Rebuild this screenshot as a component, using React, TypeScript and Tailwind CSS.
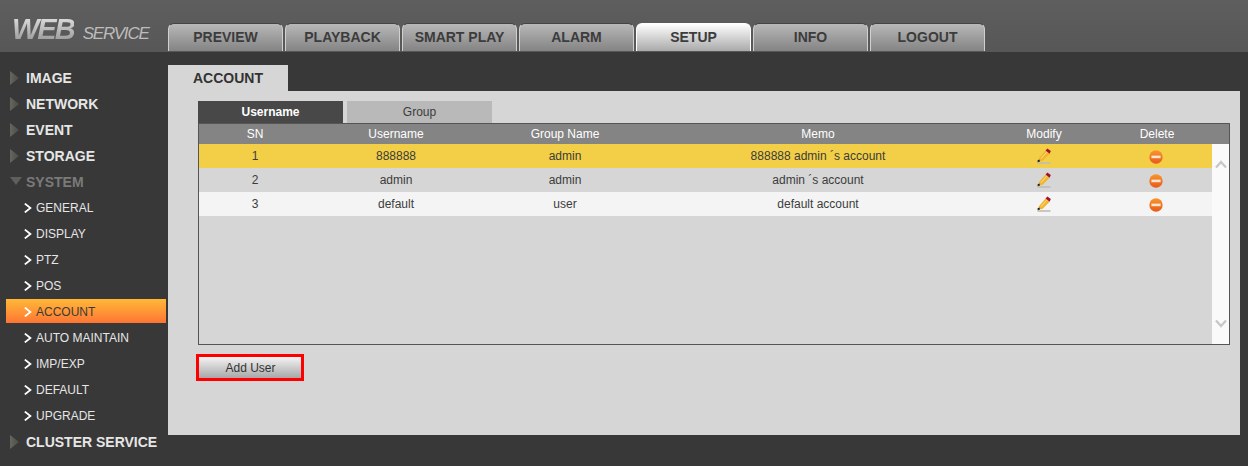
const TABS = ['PREVIEW', 'PLAYBACK', 'SMART PLAY', 'ALARM', 'SETUP', 'INFO', 'LOGOUT'];
const SUB_ITEMS = ['GENERAL', 'DISPLAY', 'PTZ', 'POS', 'ACCOUNT', 'AUTO MAINTAIN', 'IMP/EXP', 'DEFAULT', 'UPGRADE'];
const USERS = [
  { sn: 1, name: '888888', group: 'admin', memo: '888888 admin ´s account', rowClass: 'bg-[#f2cf46]' },
  { sn: 2, name: 'admin', group: 'admin', memo: 'admin ´s account', rowClass: 'bg-[#d6d6d6]' },
  { sn: 3, name: 'default', group: 'user', memo: 'default account', rowClass: 'bg-[#f4f4f4]' },
];

function Triangle({ down = false, dim = false }: { down?: boolean; dim?: boolean }) {
  return (
    <svg width="13" height="14" viewBox="0 0 13 14" className="shrink-0">
      <defs>
        <linearGradient id="tri" x1="0" y1="0" x2="1" y2="0">
          <stop offset="0" stopColor="#66665f" />
          <stop offset="1" stopColor="#4c4c48" />
        </linearGradient>
      </defs>
      {down
        ? <path d="M0 2 H12 L6 10 Z" fill={dim ? '#5e5e5a' : 'url(#tri)'} />
        : <path d="M0 0 L9 7 L0 14 Z" fill="url(#tri)" />}
    </svg>
  );
}

function Chevron() {
  return (
    <svg width="8" height="10" viewBox="0 0 8 10" className="shrink-0">
      <path d="M0.8 0.6 L6.4 5 L0.8 9.4" fill="none" stroke="#ffffff" strokeWidth="1.8" />
    </svg>
  );
}

function MainItem({ label, down = false, dim = false }: { label: string; down?: boolean; dim?: boolean }) {
  return (
    <div className="h-[26px] flex items-center pl-[10px] gap-[3px]">
      <div className="w-[13px] flex justify-center"><Triangle down={down} dim={dim} /></div>
      <span className={`text-[14px] font-bold ${dim ? 'text-[#7a7a7a]' : 'text-[#e6e6e6]'}`}>{label}</span>
    </div>
  );
}

function PencilIcon() {
  return (
    <svg width="14" height="16" viewBox="0 0 14 16" className="-ml-[1px]">
      <rect x="0.5" y="14.2" width="13" height="1.6" fill="#bdbdb6" />
      <path d="M2 10 L8.6 2.6 L12.6 5.8 L5.4 13 L1.4 13.6 Z" fill="#f3b42e" />
      <path d="M4 10.6 L10.2 3.8" stroke="#fbe28a" strokeWidth="1" />
      <path d="M8.6 2.6 L10.4 0.6 L13.8 3 L12.6 5.8 Z" fill="#a3122a" />
      <path d="M0.6 12.2 L2.4 11.6 L3 13.6 L0.6 14.2 Z" fill="#222222" />
    </svg>
  );
}

function DeleteIcon() {
  return (
    <svg width="14" height="14" viewBox="0 0 14 14">
      <defs>
        <linearGradient id="del" x1="0" y1="0" x2="0" y2="1">
          <stop offset="0" stopColor="#f8962a" />
          <stop offset="1" stopColor="#e8591a" />
        </linearGradient>
      </defs>
      <circle cx="7" cy="7" r="6.7" fill="url(#del)" />
      <rect x="2.4" y="5.6" width="9.2" height="2.6" fill="#f6e3d2" />
    </svg>
  );
}

export default function App() {
  return (
    <div className="w-[1248px] h-[466px] overflow-hidden bg-[#383838] font-['Liberation_Sans',Arial,sans-serif] flex flex-col">
      {/* top bar */}
      <div className="h-[52px] shrink-0 bg-gradient-to-b from-[#5e5e5e] to-[#575757] flex">
        <div className="w-[168px] shrink-0 pl-3 pt-[12px] flex items-baseline gap-[9px] italic">
          <span className="text-[29px] leading-[34px] font-bold tracking-[-2px] text-transparent bg-clip-text bg-gradient-to-b from-[#ededed] to-[#8e8e8e]">WEB</span>
          <span className="text-[17px] leading-[20px] tracking-[-1.2px] text-[#bdbdbd]">SERVICE</span>
        </div>
        <div className="flex gap-[2px] pt-[23px] h-[52px]">
          {TABS.map(t => (
            <div
              key={t}
              className={`w-[115px] h-[28px] rounded-t-[6px] border border-b-0 flex items-center justify-center text-[14px] font-bold ${
                t === 'SETUP'
                  ? 'bg-gradient-to-b from-[#ffffff] to-[#aaaaaa] border-[#ffffff] text-[#3c3c3c]'
                  : 'bg-gradient-to-b from-[#b8b8b8] to-[#848484] border-[#d0d0d0] border-t-[#444444] text-[#3c3c3c]'
              }`}
            >
              {t}
            </div>
          ))}
        </div>
      </div>

      <div className="flex flex-1 min-h-0">
        {/* sidebar */}
        <div className="w-[168px] shrink-0 pt-[13px]">
          <MainItem label="IMAGE" />
          <MainItem label="NETWORK" />
          <MainItem label="EVENT" />
          <MainItem label="STORAGE" />
          <MainItem label="SYSTEM" down dim />
          {SUB_ITEMS.map(s => (
            <div key={s} className="h-[26px] flex items-start">
              <div
                className={`w-[160px] h-[24px] ml-[6px] pt-[1px] flex items-center pl-[18px] gap-[4px] text-[12px] ${
                  s === 'ACCOUNT' ? 'bg-gradient-to-b from-[#ffb838] to-[#ff7433] text-[#3a3a3a]' : 'text-[#e6e6e6]'
                }`}
              >
                <Chevron />
                <span>{s}</span>
              </div>
            </div>
          ))}
          <MainItem label="CLUSTER SERVICE" />
        </div>

        {/* content */}
        <div className="w-[1072px] pt-[13px]">
          <div className="w-[120px] h-[26px] bg-[#d6d6d6] flex items-center pl-[25px] text-[14px] font-bold text-[#333333]">ACCOUNT</div>
          <div className="h-[344px] bg-[#d6d6d6] pt-[10px] pl-[30px] pr-[10px]">
            <div className="flex gap-[4px] h-[22px] text-[12px]">
              <div className="w-[145px] bg-[#484848] text-white font-bold flex items-center justify-center">Username</div>
              <div className="w-[145px] bg-[#b9b9b9] text-[#3c3c3c] flex items-center justify-center">Group</div>
            </div>
            <div className="w-[1032px] h-[222px] border border-[#555555] flex flex-col text-[12px]">
              <div className="h-[20px] shrink-0 bg-[#848484] text-white flex items-center">
                <div className="w-[112px] text-center">SN</div>
                <div className="w-[170px] text-center">Username</div>
                <div className="w-[168px] text-center">Group Name</div>
                <div className="w-[338px] text-center">Memo</div>
                <div className="w-[114px] text-center">Modify</div>
                <div className="w-[114px] text-center pr-[2px]">Delete</div>
              </div>
              <div className="flex flex-1 min-h-0">
                <div className="flex-1">
                  {USERS.map(u => (
                    <div key={u.sn} className={`h-[24px] flex items-center text-[#3c3c3c] ${u.rowClass}`}>
                      <div className="w-[112px] text-center">{u.sn}</div>
                      <div className="w-[170px] text-center">{u.name}</div>
                      <div className="w-[168px] text-center">{u.group}</div>
                      <div className="w-[338px] text-center">{u.memo}</div>
                      <div className="w-[114px] flex justify-center"><PencilIcon /></div>
                      <div className="w-[110px] flex justify-center pt-[2px]"><DeleteIcon /></div>
                    </div>
                  ))}
                </div>
                <div className="w-[17px] bg-[#fafafa] flex flex-col items-center justify-between py-[16px]">
                  <svg width="12" height="9" viewBox="0 0 12 9"><path d="M1 7.5 L6 2 L11 7.5" fill="none" stroke="#c8c8c8" strokeWidth="2.4" /></svg>
                  <svg width="12" height="9" viewBox="0 0 12 9"><path d="M1 1.5 L6 7 L11 1.5" fill="none" stroke="#c8c8c8" strokeWidth="2.4" /></svg>
                </div>
              </div>
            </div>
            <div className="mt-[9px] w-[108px] h-[27px] -ml-[2px] pl-[1px] border-[3px] border-[#ff0000] bg-gradient-to-b from-[#f4f4f4] to-[#a8a8a8] flex items-center justify-center text-[12px] text-[#333333]">
              Add User
            </div>
          </div>
        </div>
      </div>
    </div>
  );
}
